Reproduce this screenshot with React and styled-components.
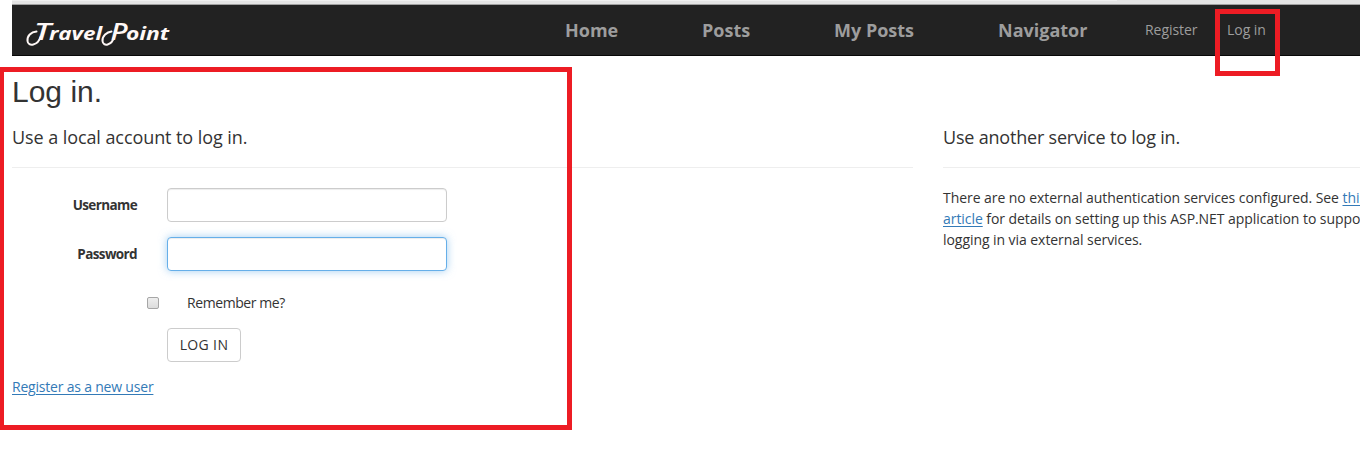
import React from 'react';
import styled, { createGlobalStyle, css } from 'styled-components';

const GlobalStyle = createGlobalStyle`
  * { box-sizing: border-box; }
  body {
    margin: 0;
    background: #fff;
    color: #333;
    font: 14px/21px "Trebuchet MS", "Open Sans", sans-serif;
    letter-spacing: -0.06px;
  }
`;

const Page = styled.div`
  position: relative;
  height: 452px;
  overflow: hidden;
  padding-left: 12px;
`;

const BrowserEdge = styled.div`
  height: 5px;
  background: linear-gradient(#f0f0f0, #f0f0f0) 0 0 / 1105px 1px no-repeat #e4e4e4;
  border-bottom: 1px solid #a0a0a0;
`;

const Navbar = styled.nav`
  display: grid;
  grid-template-columns: 553px 137px 132px 164px 147px 82px auto;
  align-items: center;
  height: 51px;
  background: #222;
  border-bottom: 1px solid #080808;
`;

const Brand = styled.svg`
  width: 170px;
  height: 50px;
  fill: #fff8f6;
  font-family: "Open Sans", sans-serif;
  font-style: italic;
  font-weight: 700;
`;

const NavLink = styled.a`
  color: #9d9d9d;
  white-space: nowrap;
  padding-bottom: ${({ $main }) => ($main ? '0' : '2px')};
  font-size: ${({ $main }) => ($main ? '18px' : '14px')};
  font-weight: ${({ $main }) => ($main ? 700 : 400)};
  letter-spacing: ${({ $main }) => ($main ? '0' : '-0.05px')};
`;

const Title = styled.h2`
  margin: 19px 0 19px;
  font: 400 30px/33px "Liberation Sans", Arial, sans-serif;
  letter-spacing: 0;
`;

const Columns = styled.div`
  display: grid;
  grid-template-columns: 901px 436px;
  column-gap: 30px;
`;

const SectionTitle = styled.h4`
  margin: 0 0 20px;
  padding-bottom: 20px;
  border-bottom: 1px solid #eee;
  font-size: 18px;
  font-weight: 400;
  line-height: 20px;
  letter-spacing: ${({ $spacing }) => $spacing};
`;

const Field = styled.div`
  display: grid;
  grid-template-columns: 125px 280px;
  column-gap: 30px;
  align-items: center;
  margin-bottom: 15px;
`;

const Label = styled.label`
  text-align: right;
  font-size: 13.5px;
  font-weight: 700;
  letter-spacing: -0.62px;
`;

const Input = styled.input`
  width: 280px;
  height: 34px;
  padding: 6px 12px;
  border: 1px solid #ccc;
  border-radius: 4px;
  outline: 0;
  background: #fff;
  box-shadow: inset 0 1px 1px rgba(0, 0, 0, 0.075);
  ${({ $active }) => $active && css`
    border-color: #66afe9;
    box-shadow: inset 0 1px 1px rgba(0, 0, 0, 0.075), 0 0 8px rgba(102, 175, 233, 0.6);
  `}
`;

const Remember = styled.label`
  display: flex;
  align-items: center;
  gap: 28px;
  margin: 21px 0 15px 135px;
  letter-spacing: -0.42px;
`;

const Checkbox = styled.input`
  appearance: none;
  width: 12px;
  height: 12px;
  margin: 0;
  border: 1px solid #a6a6a6;
  border-radius: 2px;
  background: linear-gradient(#eee, #dcdcdc);
`;

const Submit = styled.button`
  display: block;
  width: 74px;
  height: 34px;
  margin: 0 0 14px 155px;
  padding: 0 0 2px;
  border: 1px solid #ccc;
  border-radius: 4px;
  background: #fff;
  color: #333;
  font: inherit;
  letter-spacing: 0.35px;
`;

const Link = styled.a`
  color: #337ab7;
  text-decoration: underline;
  text-underline-offset: 2px;
  letter-spacing: ${({ $spacing }) => $spacing || 'inherit'};
`;

const Note = styled.p`
  margin: -1px 0 0;
`;

const Highlight = styled.div`
  position: absolute;
  border: 5px solid #ed1c24;
  pointer-events: none;
`;

const FormHighlight = styled(Highlight)`
  left: -1px;
  top: 67px;
  width: 573px;
  height: 363px;
`;

const LoginHighlight = styled(Highlight)`
  left: 1215px;
  top: 9px;
  width: 65px;
  height: 67px;
`;

function Logo() {
  return (
    <Brand viewBox="12 5 170 50" role="img" aria-label="TravelPoint">
      <text y="39.5" fontSize="18">
        <tspan x="34" fontSize="24" fontWeight="600" textLength="17" lengthAdjust="spacingAndGlyphs">T</tspan>
      </text>
      <text x="49" y="39.500" fontSize="18" textLength="53" lengthAdjust="spacingAndGlyphs">ravel</text>
      <text x="110.500" y="39.500" fontSize="24" fontWeight="600" textLength="17" lengthAdjust="spacingAndGlyphs">P</text>
      <text x="126" y="39.500" fontSize="18" textLength="43" lengthAdjust="spacingAndGlyphs">oint</text>
      <g fill="none" stroke="#fff8f6" strokeWidth="2" strokeLinecap="round">
        <path d="M40.500 37C38 45.500 28 47 27.500 41C27 36 31 32 36.500 31.500" />
        <path d="M114 37C112 45.500 103 47 102.500 41C102 36 107 32 111.500 31.500" />
      </g>
    </Brand>
  );
}

export default function App() {
  return (
    <Page>
      <GlobalStyle />
      <BrowserEdge />
      <Navbar>
        <Logo />
        <NavLink $main>Home</NavLink>
        <NavLink $main>Posts</NavLink>
        <NavLink $main>My Posts</NavLink>
        <NavLink $main>Navigator</NavLink>
        <NavLink>Register</NavLink>
        <NavLink>Log in</NavLink>
      </Navbar>
      <Title>Log in.</Title>
      <Columns>
        <section>
          <SectionTitle $spacing="-0.08px">Use a local account to log in.</SectionTitle>
          <Field>
            <Label htmlFor="username">Username</Label>
            <Input id="username" />
          </Field>
          <Field>
            <Label htmlFor="password">Password</Label>
            <Input id="password" type="password" $active />
          </Field>
          <Remember>
            <Checkbox type="checkbox" />
            Remember me?
          </Remember>
          <Submit>LOG IN</Submit>
          <Link $spacing="-0.2px">Register as a new user</Link>
        </section>
        <section>
          <SectionTitle $spacing="-0.2px">Use another service to log in.</SectionTitle>
          <Note>
            There are no external authentication services configured. See <Link>this article</Link> for
            details on setting up this ASP.NET application to support logging in via external services.
          </Note>
        </section>
      </Columns>
      <FormHighlight />
      <LoginHighlight />
    </Page>
  );
}
